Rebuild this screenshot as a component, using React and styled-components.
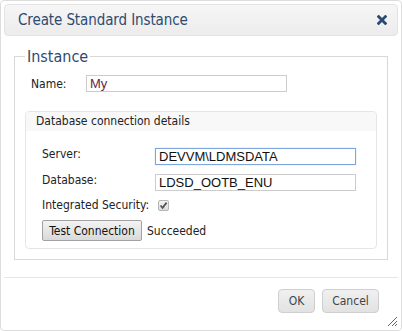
import React from "react";
import styled, { createGlobalStyle } from "styled-components";

const GlobalStyle = createGlobalStyle`
  html, body {
    margin: 0;
    padding: 0;
    background: #ffffff;
  }
  body {
    font-family: "DejaVu Sans Condensed", "DejaVu Sans", Verdana, sans-serif;
  }
`;

function App() {
  return (
    <>
      <GlobalStyle />
      <Dialog>
        <TitleBar>
          <Title>Create Standard Instance</Title>
          <CloseIcon viewBox="0 0 10 10">
            <path
              d="M1.6 1.6 L8.4 8.4 M8.4 1.6 L1.6 8.4"
              stroke="#2c4a72"
              strokeWidth="2.8"
              strokeLinecap="square"
            />
          </CloseIcon>
        </TitleBar>
        <Body>
          <FieldSet>
            <Legend>Instance</Legend>
            <NameRow>
              <Label width="55px">Name:</Label>
              <TextInput width="201px" color="#6e1d3f" defaultValue="My" />
            </NameRow>
            <Panel>
              <PanelHeader>Database connection details</PanelHeader>
              <PanelBody>
                <FormRow>
                  <Label width="113px">Server:</Label>
                  <TextInput width="201px" focused defaultValue="DEVVM\LDMSDATA" />
                </FormRow>
                <FormRow>
                  <Label width="113px">Database:</Label>
                  <TextInput width="201px" defaultValue="LDSD_OOTB_ENU" />
                </FormRow>
                <CheckRow>
                  <Label>Integrated Security:</Label>
                  <CheckBox>
                    <svg width="9" height="9" viewBox="0 0 9 9">
                      <path
                        d="M1.5 4.5 L3.6 6.8 L7.6 1.6"
                        stroke="#555"
                        strokeWidth="1.8"
                        fill="none"
                      />
                    </svg>
                  </CheckBox>
                </CheckRow>
                <ButtonRow>
                  <TestButton>Test Connection</TestButton>
                  <Status>Succeeded</Status>
                </ButtonRow>
              </PanelBody>
            </Panel>
          </FieldSet>
        </Body>
        <Footer>
          <DialogButton width="37px">OK</DialogButton>
          <DialogButton width="57px">Cancel</DialogButton>
        </Footer>
        <Grip viewBox="0 0 12 12">
          <path d="M11 2 L2 11 M11 6 L6 11 M11 9 L9 11" stroke="#666" strokeWidth="1" />
        </Grip>
      </Dialog>
    </>
  );
}

const Dialog = styled.div`
  position: relative;
  box-sizing: border-box;
  width: 402px;
  height: 331px;
  border: 1px solid #dddddd;
  border-radius: 4px;
  background: #ffffff;
  padding: 3px;
  display: flex;
  flex-direction: column;
`;

const TitleBar = styled.div`
  box-sizing: border-box;
  height: 32px;
  display: flex;
  align-items: center;
  justify-content: space-between;
  padding: 0 10px 0 13px;
  border: 1px solid #e3e3e3;
  border-radius: 4px;
  background: linear-gradient(#f6f6f6, #ececec);
`;

const Title = styled.span`
  font-size: 15px;
  color: #2e4b70;
  letter-spacing: -0.1px;
`;

const CloseIcon = styled.svg`
  width: 10px;
  height: 10px;
`;

const Body = styled.div`
  flex: 1;
  padding: 11px 10px 0 10px;
`;

const FieldSet = styled.fieldset`
  margin: 0;
  padding: 6px 10px 10px 10px;
  border: 1px solid #d8d8d8;
`;

const Legend = styled.legend`
  padding: 0 2px;
  font-size: 16px;
  color: #2e4b70;
`;

const NameRow = styled.div`
  display: flex;
  align-items: center;
  padding-left: 6px;
  height: 17px;
  margin-top: 3px;
`;

const Label = styled.span`
  width: ${(p) => p.width || "auto"};
  flex-shrink: 0;
  font-size: 12px;
  color: #222222;
`;

const TextInput = styled.input`
  box-sizing: border-box;
  width: ${(p) => p.width};
  height: 17px;
  margin: 0;
  padding: 0 3px;
  border: 1px solid ${(p) => (p.focused ? "#7ea6dc" : "#cccccc")};
  box-shadow: ${(p) => (p.focused ? "0 0 1px #9cc0ec" : "none")};
  outline: none;
  font-family: "Liberation Sans Narrow", "Liberation Sans", Arial, sans-serif;
  font-size: 13px;
  color: ${(p) => p.color || "#111111"};
`;

const Panel = styled.div`
  margin-top: 19px;
  border: 1px solid #e6e6e6;
  border-radius: 4px;
  overflow: hidden;
`;

const PanelHeader = styled.div`
  height: 19px;
  line-height: 18px;
  padding-left: 10px;
  background: #f8f8f8;
  font-size: 12px;
  color: #222222;
`;

const PanelBody = styled.div`
  padding: 17px 16px 7px 16px;
  display: flex;
  flex-direction: column;
`;

const FormRow = styled.div`
  display: flex;
  align-items: flex-start;
  height: 17px;
  margin-bottom: 9px;
  & > span {
    margin-top: -1px;
  }
`;

const CheckRow = styled.div`
  display: flex;
  align-items: center;
  height: 12px;
  margin-top: -1px;
  gap: 9px;
`;

const CheckBox = styled.span`
  box-sizing: border-box;
  width: 11px;
  height: 11px;
  border: 1px solid #b5b5b5;
  border-radius: 2px;
  background: linear-gradient(#f4f4f4, #dcdcdc);
  display: flex;
  align-items: center;
  justify-content: center;
`;

const ButtonRow = styled.div`
  display: flex;
  align-items: center;
  gap: 5px;
  margin-top: 9px;
`;

const TestButton = styled.button`
  box-sizing: border-box;
  width: 100px;
  height: 21px;
  padding: 0;
  border: 1px solid #a2a2a2;
  border-radius: 2px;
  background: linear-gradient(#f3f3f3, #d9d9d9);
  font-family: "DejaVu Sans Condensed", "DejaVu Sans", Verdana, sans-serif;
  font-size: 12px;
  color: #111111;
`;

const Status = styled.span`
  font-size: 12px;
  color: #222222;
`;

const Footer = styled.div`
  display: flex;
  justify-content: flex-end;
  gap: 7px;
  border-top: 1px solid #e6e6e6;
  padding: 11px 19px 14px 0;
`;

const DialogButton = styled.button`
  box-sizing: border-box;
  width: ${(p) => p.width};
  height: 24px;
  padding: 0;
  border: 1px solid #cfcfcf;
  border-radius: 4px;
  background: linear-gradient(#f0f0f0, #e2e2e2);
  font-family: "DejaVu Sans Condensed", "DejaVu Sans", Verdana, sans-serif;
  font-size: 12px;
  color: #444444;
`;

const Grip = styled.svg`
  position: absolute;
  right: 3px;
  bottom: 3px;
  width: 12px;
  height: 12px;
`;

export default App;
